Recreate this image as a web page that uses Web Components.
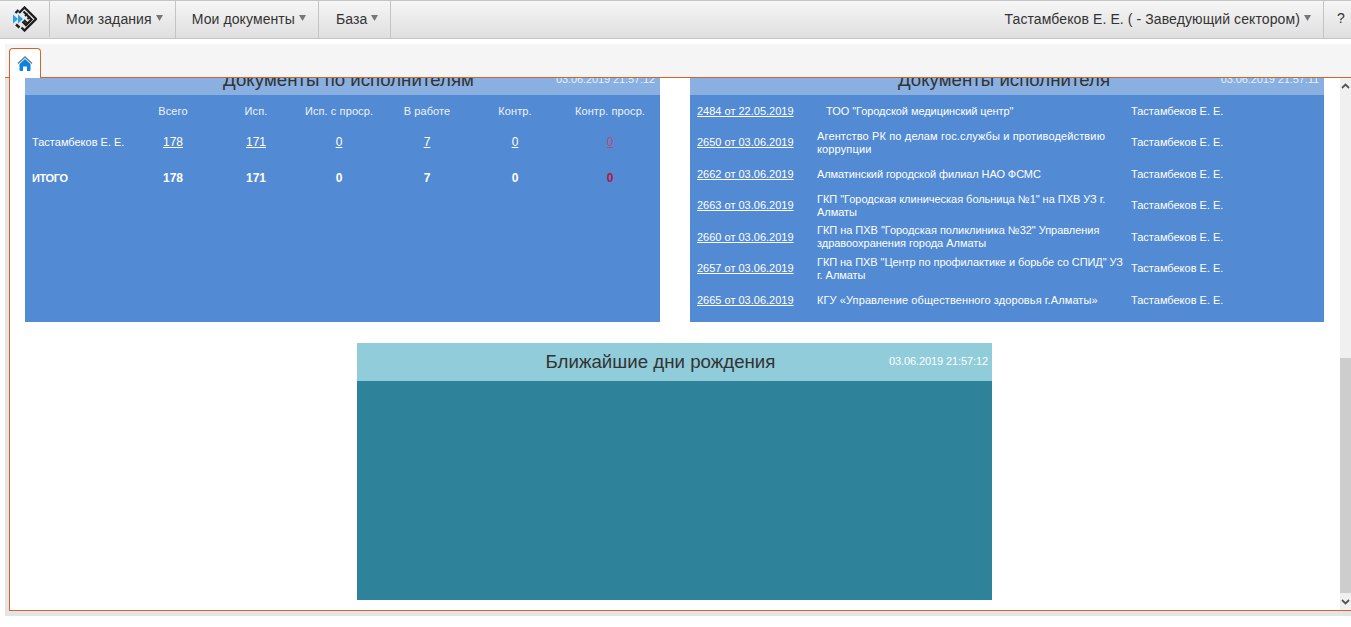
<!DOCTYPE html>
<html lang="ru">
<head>
<meta charset="utf-8">
<title>Документы</title>
<style>
  html, body { margin: 0; height: 100%; background: #fff; overflow: hidden; }
  body { font-family: "Liberation Sans", Arial, sans-serif; color: #333; }
</style>
</head>
<body>
<app-shell>
  <top-bar slot="bar">
    <nav-item>Мои задания</nav-item>
    <nav-item>Мои документы</nav-item>
    <nav-item style="padding-left:17px">База</nav-item>
    <nav-item slot="right">Тастамбеков Е. Е. ( - Заведующий сектором)</nav-item>
  </top-bar>
  <tab-strip slot="tabs"></tab-strip>
  <scroll-pane slot="content">
    <div style="flex:none;display:grid;grid-template-columns:635px 634px;column-gap:30px;align-items:start;">
      <doc-panel title-text="Документы по исполнителям" date="03.06.2019 21:57:12" clipped style="--pl:12px">
        <exec-table></exec-table>
      </doc-panel>
      <doc-panel title-text="Документы исполнителя" date="03.06.2019 21:57:11" clipped style="--pr:6px">
        <doc-table></doc-table>
      </doc-panel>
    </div>
    <doc-panel title-text="Ближайшие дни рождения" date="03.06.2019 21:57:12" teal
      style="--pr:28px;flex:none;width:635px;margin:21px 0 0 332px;"></doc-panel>
  </scroll-pane>
</app-shell>

<script>
class AppShell extends HTMLElement {
  constructor() {
    super();
    this.attachShadow({mode: "open"}).innerHTML = `
    <style>
      :host { display: flex; flex-direction: column; height: 627px; }
      .work { margin: 5px 0 0 5px; padding-bottom: 5px; height: 572px; box-sizing: border-box;
              background: #e4e4e4; display: flex; flex-direction: column; }
      .frame { flex: 1; min-height: 0; margin-left: 4px; display: flex; }
      .top { background: #f5f5f5; }
    </style>
    <slot name="bar"></slot>
    <div class="work">
      <div class="top"><slot name="tabs"></slot></div>
      <div class="frame"><slot name="content"></slot></div>
    </div>`;
  }
}

class TopBar extends HTMLElement {
  constructor() {
    super();
    this.attachShadow({mode: "open"}).innerHTML = `
    <style>
      :host { display: flex; height: 39px; box-sizing: border-box;
              border-top: 1px solid #c4c4c4; border-bottom: 1px solid #c4c4c4;
              background: linear-gradient(#f6f6f6, #dfdfdf); font-size: 14px; letter-spacing: .1px; color: #333; }
      .logo { width: 50px; flex: none; display: flex; align-items: center; justify-content: center;
              border-right: 1px solid #c4c4c4; margin-bottom: 1px; padding-bottom: 1px; box-sizing: border-box; }
      .spacer { flex: 1; }
      .help { width: 28px; flex: none; border-left: 1px solid #c4c4c4; line-height: 35px; padding-left: 13px; box-sizing: border-box; }
      svg { display: block; }
    </style>
    <div class="logo">
      <svg width="24" height="26" viewBox="0 0 24 26" fill="none" stroke="#1e1e1e" stroke-width="2.300">
        <path d="M6 7 L11.500 1.500 L23 13 L11.500 24.500 L8.500 21.500"/>
        <path d="M10.500 5.500 L18.500 13.500 L13 19 L9.500 15.500"/>
        <path d="M12 10 L14.500 7.500 M14.500 13 L17 10.500 M11 14 L14.500 17.500" stroke-width="1.800"/>
        <path d="M5.500 4 L2.500 7 M6.500 21.500 L3 18.500" stroke-width="2.400"/>
        <path d="M0 8.500 L5 13 L0 17.500Z M5 8.500 L10 13 L5 17.500Z" fill="#29a3e8" stroke="none"/>
      </svg>
    </div>
    <slot></slot>
    <div class="spacer"></div>
    <slot name="right"></slot>
    <div class="help">?</div>`;
  }
}

class NavItem extends HTMLElement {
  constructor() {
    super();
    this.attachShadow({mode: "open"}).innerHTML = `
    <style>
      :host { display: flex; align-items: center; padding: 0 12px 2px 16px; cursor: pointer; }
      :host(:not([slot])) { border-right: 1px solid #c4c4c4; }
      svg { display: block; flex: none; margin: -1px 0 0 4px; }
    </style>
    <slot></slot><svg width="7" height="6" viewBox="0 0 7 6"><path d="M0 0 H7 L3.500 6Z" fill="#777"/></svg>`;
  }
}

class TabStrip extends HTMLElement {
  constructor() {
    super();
    this.attachShadow({mode: "open"}).innerHTML = `
    <style>
      :host { display: block; height: 34px; box-sizing: border-box; padding: 4px 0 0 4px;
              border-bottom: 1px solid #d2652a; }
      .tab { width: 32px; height: 30px; box-sizing: border-box; background: #fff;
             border: 1px solid #d2652a; border-bottom: 0; border-radius: 4px 4px 0 0;
             display: flex; justify-content: center; padding-top: 7px; }
      svg { display: block; }
    </style>
    <div class="tab">
      <svg width="16" height="16" viewBox="0 0 16 16">
        <path d="M1 7.500 L8 1 L15 7.500" fill="none" stroke="#5f7f95" stroke-width="1.400"/>
        <path d="M2.500 8 L8 3 L13.500 8 V14 Q13.500 15 12.500 15 H10 V10.500 H6 V15 H3.500 Q2.500 15 2.500 14Z" fill="#0a84e0"/>
      </svg>
    </div>`;
  }
}

class ScrollPane extends HTMLElement {
  constructor() {
    super();
    this.attachShadow({mode: "open"}).innerHTML = `
    <style>
      :host { flex: 1; display: flex; min-width: 0; height: 100%; box-sizing: border-box; background: #fff;
              border-left: 1px solid #d2652a; border-bottom: 1px solid #d2652a; }
      .view { flex: 1; min-width: 0; overflow: hidden; display: flex; flex-direction: column;
              justify-content: flex-end; padding: 0 0 10px 15px; }
      .track { width: 11px; flex: none; background: #f0f0f0; display: flex; flex-direction: column; }
      .btn { height: 15px; flex: none; display: flex; align-items: center; justify-content: center; }
      .gap { flex: 1; }
      .thumb { height: 235px; flex: none; background: #cdcdcd; }
      svg { display: block; }
    </style>
    <div class="view"><slot></slot></div>
    <div class="track">
      <div class="btn"><svg width="9" height="6" viewBox="0 0 9 6"><path d="M1 5 L4.500 1.500 L8 5" fill="none" stroke="#555" stroke-width="1.800"/></svg></div>
      <div class="gap"></div>
      <div class="thumb"></div>
      <div class="btn" style="height:17px"><svg width="9" height="6" viewBox="0 0 9 6"><path d="M1 1 L4.500 4.500 L8 1" fill="none" stroke="#555" stroke-width="1.800"/></svg></div>
    </div>`;
  }
}

class DocPanel extends HTMLElement {
  constructor() {
    super();
    this.attachShadow({mode: "open"});
  }
  connectedCallback() {
    this.shadowRoot.innerHTML = `
    <style>
      :host { display: block; background: #528ad4; --head: #8ab0e1; --date: #e6eef9; }
      :host([teal]) { background: #2e8299; --head: #90ccda; --date: #fff; height: 257px; }
      .head { height: 38px; box-sizing: border-box; background: var(--head); position: relative;
              padding: 0 var(--pr, 0) 0 var(--pl, 0);
              display: flex; align-items: center; justify-content: center; font-size: 18.7px; color: #333; }
      :host([clipped]) .head { padding-top: 8px; }
      .date { position: absolute; right: 4px; top: 12px; font-size: 11px; letter-spacing: -.1px; color: var(--date); }
      :host([clipped]) .date { top: 16px; right: 5px; }
    </style>
    <div class="head"><span>${this.getAttribute("title-text")}</span><span class="date">${this.getAttribute("date")}</span></div>
    <slot></slot>`;
  }
}

class ExecTable extends HTMLElement {
  constructor() {
    super();
    const row = (cls, name, vals, tag) => `<div class="${cls} name">${name}</div>` +
      vals.map((v, i) => `<div class="${cls} num ${i == 5 ? "last" : ""}">${tag ? `<a href="#">${v}</a>` : v}</div>`).join("");
    this.attachShadow({mode: "open"}).innerHTML = `
    <style>
      :host { display: grid; height: 227px; align-content: start;
              grid-template-columns: 107px 82px 84px 82px 94px 82px 104px;
              grid-template-rows: 32px 30px 42px; color: #fff; font-size: 11px; }
      div { display: flex; align-items: center; justify-content: center; }
      .name { justify-content: flex-start; padding-left: 7px; }
      .h { color: #eef3fb; letter-spacing: .1px; }
      .last { padding-left: 4px; }
      .n { font-size: 12px; }
      .n.name { font-size: 11px; }
      .n.last { color: #bb4a72; }
      .t { font-weight: bold; font-size: 12px; }
      .t.name { font-size: 11px; letter-spacing: -.4px; }
      .t.last { color: #b5143f; }
      a { color: inherit; }
    </style>
    ${row("h", "", ["Всего", "Исп.", "Исп. с проср.", "В работе", "Контр.", "Контр. проср."])}
    ${row("n", "Тастамбеков Е. Е.", [178, 171, 0, 7, 0, 0], true)}
    ${row("t", "ИТОГО", [178, 171, 0, 7, 0, 0])}`;
  }
}

const docs = [
  ["2484 от 22.05.2019", "ТОО \"Городской медицинский центр\"", "first", -0.06],
  ["2650 от 03.06.2019", "Агентство РК по делам гос.службы и противодействию коррупции", "", 0.14],
  ["2662 от 03.06.2019", "Алматинский городской филиал НАО ФСМС", "", -0.1],
  ["2663 от 03.06.2019", "ГКП \"Городская клиническая больница №1\" на ПХВ УЗ г. Алматы", "", -0.03],
  ["2660 от 03.06.2019", "ГКП на ПХВ \"Городская поликлиника №32\" Управления здравоохранения города Алматы", "", -0.03],
  ["2657 от 03.06.2019", "ГКП на ПХВ \"Центр по профилактике и борьбе со СПИД\" УЗ г. Алматы", "", -0.06],
  ["2665 от 03.06.2019", "КГУ «Управление общественного здоровья г.Алматы»", "", 0.1]
];

class DocTable extends HTMLElement {
  constructor() {
    super();
    this.attachShadow({mode: "open"}).innerHTML = `
    <style>
      :host { display: grid; height: 227px; align-content: start; box-sizing: border-box; padding-top: .5px;
              grid-template-columns: 127px 314px 1fr; grid-auto-rows: 31.5px; color: #fff; font-size: 11px; line-height: 13px; }
      div { display: flex; align-items: center; }
      .link { padding-left: 7px; }
      .first { padding-left: 9px; }
      a { color: inherit; }
    </style>
    ${docs.map(d => `<div class="link"><a href="#">${d[0]}</a></div>
      <div class="org ${d[2]}"><span style="letter-spacing:${d[3]}px">${d[1]}</span></div>
      <div>Тастамбеков Е. Е.</div>`).join("")}`;
  }
}

customElements.define("app-shell", AppShell);
customElements.define("top-bar", TopBar);
customElements.define("nav-item", NavItem);
customElements.define("tab-strip", TabStrip);
customElements.define("scroll-pane", ScrollPane);
customElements.define("doc-panel", DocPanel);
customElements.define("exec-table", ExecTable);
customElements.define("doc-table", DocTable);
</script>
</body>
</html>
